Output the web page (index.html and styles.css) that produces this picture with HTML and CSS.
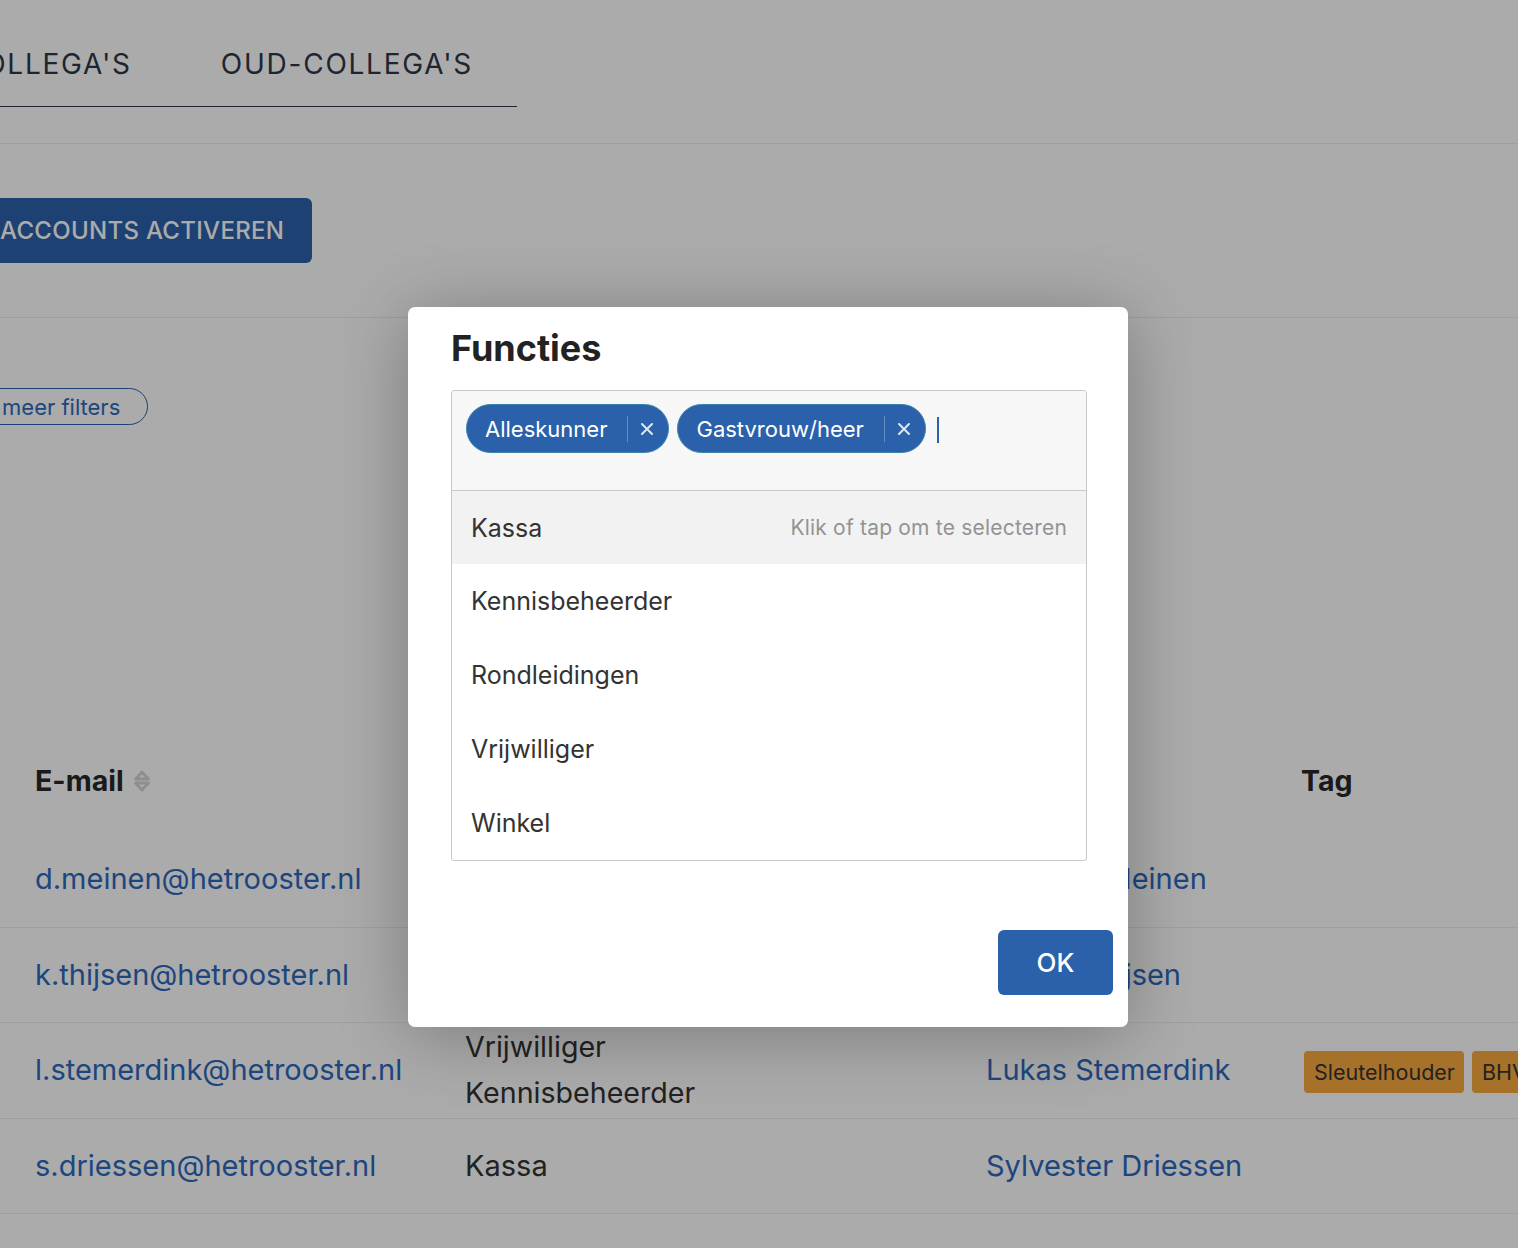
FILE: index.html
```html
<!DOCTYPE html>
<html lang="nl">
<head>
<meta charset="utf-8">
<title>Collega's</title>
<link rel="stylesheet" href="styles.css">
</head>
<body>
<div class="app">
  <header class="tabs-bar">
    <nav class="tabs">
      <a class="tab">Collega's</a>
      <a class="tab">Oud-collega's</a>
    </nav>
  </header>
  <section class="actions">
    <button class="btn-dark">Accounts activeren</button>
  </section>
  <section class="filters">
    <button class="pill">Toon meer filters</button>
  </section>
  <div class="table">
    <div class="row head">
      <div class="cell">E-mail
        <svg class="sort" width="22" height="28" viewBox="0 0 22 28"><path d="M4.5 12 L11 5 L17.5 12 Z" fill="none" stroke="#d4d4d4" stroke-width="2.8" stroke-linejoin="round"/><path d="M4.5 16 L17.5 16 L11 23 Z" fill="none" stroke="#d4d4d4" stroke-width="2.8" stroke-linejoin="round"/></svg>
      </div>
      <div class="cell">Functies</div>
      <div class="cell">Naam</div>
      <div class="cell tag-head">Tag</div>
    </div>
    <div class="row">
      <div class="cell link">d.meinen@hetrooster.nl</div>
      <div class="cell">Alleskunner</div>
      <div class="cell link">Dennise Meinen</div>
      <div class="cell"></div>
    </div>
    <div class="row">
      <div class="cell link">k.thijsen@hetrooster.nl</div>
      <div class="cell">Gastvrouw/heer</div>
      <div class="cell link">Karina Thijsen</div>
      <div class="cell"></div>
    </div>
    <div class="row">
      <div class="cell link">l.stemerdink@hetrooster.nl</div>
      <div class="cell multi"><span>Vrijwilliger</span><span>Kennisbeheerder</span></div>
      <div class="cell link">Lukas Stemerdink</div>
      <div class="cell tags"><span class="tag">Sleutelhouder</span><span class="tag">BHV</span></div>
    </div>
    <div class="row">
      <div class="cell link">s.driessen@hetrooster.nl</div>
      <div class="cell">Kassa</div>
      <div class="cell link">Sylvester Driessen</div>
      <div class="cell"></div>
    </div>
    <div class="row">
      <div class="cell link">t.hoffman@hetrooster.nl</div>
      <div class="cell">Alleskunner</div>
      <div class="cell link">Tiffany Hoffman</div>
      <div class="cell"></div>
    </div>
  </div>
</div>

<div class="overlay"></div>

<div class="modal">
  <div class="modal-body">
    <h2 class="modal-title">Functies</h2>
    <div class="select">
      <div class="select-input">
        <span class="chip"><span class="chip-label">Alleskunner</span><span class="chip-x"><svg width="14" height="14" viewBox="0 0 14 14"><path d="M2 2 L12 12 M12 2 L2 12" stroke="#dfe6f1" stroke-width="2" stroke-linecap="round"/></svg></span></span>
        <span class="chip"><span class="chip-label">Gastvrouw/heer</span><span class="chip-x"><svg width="14" height="14" viewBox="0 0 14 14"><path d="M2 2 L12 12 M12 2 L2 12" stroke="#dfe6f1" stroke-width="2" stroke-linecap="round"/></svg></span></span>
        <span class="caret"></span>
      </div>
      <ul class="options">
        <li class="option active"><span>Kassa</span><span class="hint">Klik of tap om te selecteren</span></li>
        <li class="option">Kennisbeheerder</li>
        <li class="option">Rondleidingen</li>
        <li class="option">Vrijwilliger</li>
        <li class="option">Winkel</li>
      </ul>
    </div>
  </div>
  <div class="modal-footer">
    <button class="btn-ok">OK</button>
  </div>
</div>
</body>
</html>
```

FILE: styles.css
```css
* { box-sizing: border-box; }
html, body { margin: 0; padding: 0; }
body {
  font-family: Inter, "Noto Sans", "Liberation Sans", sans-serif;
  background: #ffffff;
  color: #333333;
  width: 1518px;
  height: 1248px;
  overflow: hidden;
  position: relative;
}
.app { width: 1518px; }

/* tabs */
.tabs-bar {
  height: 144px;
  border-bottom: 1px solid #eeeeee;
}
.tabs {
  display: inline-flex;
  margin-left: -82px;
  border-bottom: 1px solid #2f3848;
  height: 107px;
}
.tab {
  display: block;
  padding: 44px 44px 0;
  font-size: 28px;
  line-height: 40px;
  letter-spacing: 1.75px;
  text-transform: uppercase;
  color: #2f3848;
}
.tab + .tab { padding-left: 45px; padding-right: 44px; }

/* actions */
.actions {
  height: 174px;
  padding-top: 54px;
  border-bottom: 1px solid #eeeeee;
}
.btn-dark {
  display: block;
  margin-left: -28px;
  height: 65px;
  padding: 0 28px;
  border: 0;
  border-radius: 6px;
  background: #2b61ab;
  color: #ffffff;
  font-family: inherit;
  font-size: 24px;
  font-weight: 500;
  letter-spacing: 0.3px;
  text-transform: uppercase;
}

/* filters */
.filters {
  height: 412px;
  padding-top: 70px;
}
.pill {
  display: block;
  margin-left: -75px;
  height: 37px;
  padding: 0 27px 0 18px;
  border: 1.5px solid #2b61ab;
  border-radius: 19px;
  background: transparent;
  color: #2d69bd;
  font-family: inherit;
  font-size: 22px;
  line-height: 34px;
}

/* table */
.row {
  display: grid;
  grid-template-columns: 430px 521px 318px 1fr;
  padding-left: 35px;
  height: 95.5px;
  border-bottom: 1.5px solid #eeeeee;
  align-items: center;
  font-size: 29px;
  line-height: 46px;
}
.row.head {
  height: 102px;
  border-bottom: 0;
  font-weight: 700;
  color: #272727;
  font-size: 28.5px;
}
.cell { white-space: nowrap; overflow: hidden; }
.head .cell { display: flex; align-items: center; gap: 7px; }
.tag-head { margin-left: -3px; }
.sort { display: block; }
.link { color: #2d69bd; }
.multi { display: flex; flex-direction: column; font-size: 28.6px; }
.tags { display: flex; gap: 8px; overflow: visible; padding-top: 4px; }
.tag {
  display: inline-block;
  background: #f8aa3f;
  color: #333333;
  font-size: 21.5px;
  line-height: 42px;
  padding: 0 9px 0 10px;
  border-radius: 4px;
}

/* overlay + modal */
.overlay {
  position: absolute;
  inset: 0;
  background: rgba(0, 0, 0, 0.33);
}
.modal {
  position: absolute;
  left: 408px;
  top: 307px;
  width: 720px;
  height: 720px;
  background: #ffffff;
  border-radius: 7px;
  box-shadow: 0 8px 70px rgba(0, 0, 0, 0.28);
  display: flex;
  flex-direction: column;
}
.modal-body {
  padding: 19px 41px 0 43px;
  flex: 1;
}
.modal-title {
  margin: 0 0 20px;
  font-size: 36px;
  line-height: 44px;
  font-weight: 700;
  color: #222222;
}
.select {
  border: 1px solid #c9c9c9;
  border-radius: 3px;
  overflow: hidden;
}
.select-input {
  height: 100px;
  padding: 13px 14px;
  background: #f7f7f7;
  border-bottom: 1px solid #c9c9c9;
  display: flex;
  align-items: flex-start;
  gap: 8px;
}
.chip {
  display: inline-flex;
  align-items: center;
  height: 49px;
  border-radius: 25px;
  background: #2b61ab;
  border: 1px solid #3a82aa;
  color: #ffffff;
  font-size: 22px;
}
.chip-label { padding: 0 20px 0 18px; }
.chip-x {
  display: flex;
  align-items: center;
  justify-content: center;
  width: 41px;
  height: 26px;
  border-left: 1px solid rgba(255, 255, 255, 0.28);
  padding-right: 2px;
}
.caret {
  width: 2px;
  height: 26px;
  margin-top: 13px;
  margin-left: 3px;
  background: #2b61ab;
}
.options {
  list-style: none;
  margin: 0;
  padding: 0;
}
.option {
  height: 74px;
  display: flex;
  align-items: center;
  justify-content: space-between;
  padding: 0 19px;
  font-size: 25px;
  color: #333333;
}
.option.active { background: #f2f2f2; height: 73px; }
.hint { font-size: 21px; color: #939393; letter-spacing: 0.2px; }
.modal-footer {
  display: flex;
  justify-content: flex-end;
  padding: 0 15px 32px;
}
.btn-ok {
  width: 115px;
  height: 65px;
  border: 0;
  border-radius: 6px;
  background: #2b61ab;
  color: #ffffff;
  font-family: inherit;
  font-size: 26px;
  font-weight: 500;
}
```
